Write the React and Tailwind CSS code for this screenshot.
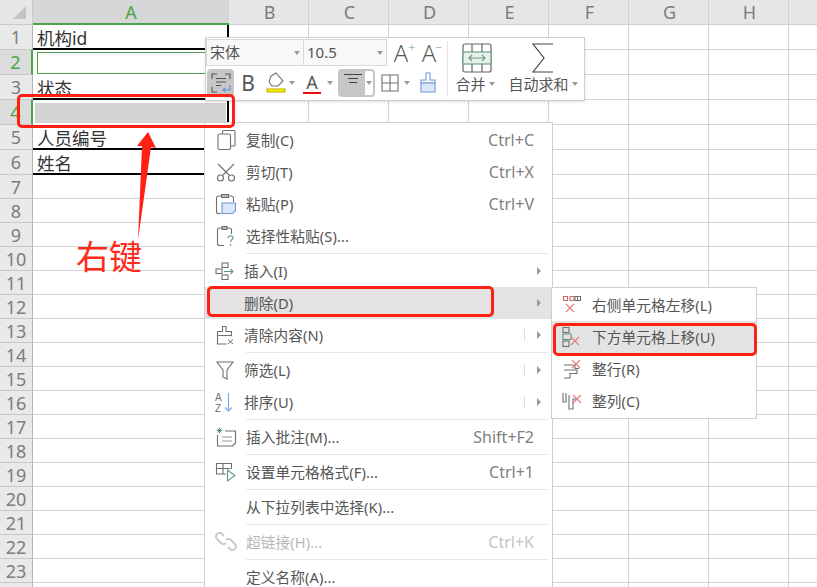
import React from 'react';

const cols = ['A', 'B', 'C', 'D', 'E', 'F', 'G', 'H', ''];
const rows = Array.from({ length: 24 }, (_, i) => i + 1);
const labels = { 1: '机构id', 3: '状态', 5: '人员编号', 6: '姓名' };

const Ico = ({ children, w = 22, h = 22 }) => (
  <svg width={w} height={h} viewBox={`0 0 ${w} ${h}`} fill="none" stroke="#707070" strokeWidth="1.1">
    {children}
  </svg>
);

const Chev = () => <span className="border-x-[3px] border-t-[4px] border-x-transparent border-t-[#9a9a9a]" />;

const Copy = () => (
  <Ico>
    <path d="M7.5 5V2.5a1 1 0 0 1 1-1H19a1 1 0 0 1 1 1V16a1 1 0 0 1-1 1h-3" />
    <rect x="3" y="5" width="12.5" height="15.5" rx="1.5" />
  </Ico>
);
const Cut = () => (
  <Ico>
    <circle cx="5.5" cy="17" r="3" />
    <circle cx="16.5" cy="17" r="3" />
    <path d="M3 3l11.5 11.5M19 3L7.5 14.5" />
  </Ico>
);
const Paste = () => (
  <Ico>
    <path d="M6 20.5H3.5a2 2 0 0 1-2-2V5a2 2 0 0 1 2-2h13a2 2 0 0 1 2 2v4M6.5 1.5h7v3h-7z" />
    <path d="M7 10h13.5v7.5l-3 3H7z" fill="#dbe6f8" stroke="#6f96d8" />
  </Ico>
);
const PasteSpecial = () => (
  <Ico>
    <path d="M9 20.5H4.5a2 2 0 0 1-2-2V5a2 2 0 0 1 2-2h10a2 2 0 0 1 2 2v4M7 1.5h5v3H7z" />
    <path d="M13 13c0-3 5-3 5 0 0 2-2.500 2-2.500 4M15.500 19v2" stroke="#5f9a78" />
  </Ico>
);
const Insert = () => (
  <Ico>
    <rect x="8" y="3" width="6" height="4.500" />
    <rect x="2" y="9" width="6" height="4.500" />
    <rect x="8" y="15" width="6" height="4.500" />
    <path d="M10 11.500h9M16.500 9l2.500 2.500-2.500 2.500" stroke="#5f9a78" />
  </Ico>
);
const Clear = () => (
  <Ico>
    <path d="M8.500 2.500h3.500v5h5.500v4h-14v-4h5zM3.500 11.500V20h9" />
    <path d="M14 15.500l5 4.500M19 15.500l-5 4.500" strokeWidth="1" />
  </Ico>
);
const Filter = () => (
  <Ico>
    <path d="M3 3h16l-6 8v9l-4-2v-7z" />
  </Ico>
);
const Sort = () => (
  <Ico>
    <text x="1" y="9.500" fontSize="10" fill="#707070" stroke="none" fontFamily="Liberation Sans">A</text>
    <text x="1" y="20.500" fontSize="10" fill="#707070" stroke="none" fontFamily="Liberation Sans">Z</text>
    <path d="M14.500 2v18M11 16.500l3.500 3.500 3.500-3.500" stroke="#7aa5e6" />
  </Ico>
);
const Note = () => (
  <Ico>
    <path d="M2.500 9v11h15l3-3V5H10" />
    <path d="M7 11h10M7 15h10" stroke="#9a9a9a" />
    <path d="M1.500 4.500h6M4.500 1.500v6M2.500 2.500l4 4M6.500 2.500l-4 4" stroke="#5f9a78" strokeWidth="1" />
  </Ico>
);
const Format = () => (
  <Ico>
    <path d="M11 13H1.500V2.500h15V8M1.500 7.500h14M8 2.500V13" />
    <path d="M12.500 9l7.500 5.500-7.500 5.500z" stroke="#5f9a78" />
  </Ico>
);
const LinkIco = () => (
  <Ico>
    <g stroke="#c9c9c9" strokeWidth="1.800">
      <path d="M9 5L7 3a3.500 3.500 0 0 0-5 5l4 4a3.500 3.500 0 0 0 5 0" />
      <path d="M11 9a3.500 3.500 0 0 1 5 0l4 4a3.500 3.500 0 0 1-5 5l-2-2" />
    </g>
  </Ico>
);
const X = ({ x = 9, y = 9 }) => <path d={`M${x} ${y}l8 8M${x + 8} ${y}l-8 8`} stroke="#e27a7a" />;
const ShiftLeft = () => (
  <Ico>
    <path d="M2.500 2.500h4v4h-4zM9 2.500h4v4H9z" stroke="#c96b6b" />
    <path d="M14 2.500h5.500v4H14zM16.500 2.500v4" />
    <X x={5} y={10} />
  </Ico>
);
const ShiftUp = () => (
  <Ico>
    <rect x="2" y="1.500" width="6" height="5" />
    <rect x="2" y="8" width="8" height="5.500" stroke="#5f9a78" />
    <rect x="2" y="15" width="6" height="5.500" />
    <X x={10} y={11} />
  </Ico>
);
const WholeRow = () => (
  <Ico>
    <path d="M3 7h11v3.500h4M3 12h13v3.500H9V20H3" />
    <X x={11} y={2} />
  </Ico>
);
const WholeCol = () => (
  <Ico>
    <path d="M2 3v9h3V3M8 5v14h4V9h3" />
    <X x={12} y={5} />
  </Ico>
);

const Sep = () => (
  <div className="h-[3px] flex items-center pl-[41px] pr-[4px]">
    <div className="h-px w-full bg-[#e8e8e8]" />
  </div>
);

const Item = ({ icon, label, shortcut, arrow, split, hover, slot = 'w-[41px]', disabled }) => (
  <div className={`flex items-center h-8 whitespace-nowrap ${hover ? 'bg-[#e3e3e3]' : ''}`}>
    <div className={`flex justify-center shrink-0 ${slot}`}>{icon}</div>
    <span className={`flex-1 tracking-[0.1px] ${disabled ? 'text-[#b8b8b8]' : 'text-[#555]'}`}>{label}</span>
    {shortcut && <span className={`mr-[18px] text-[16px] ${disabled ? 'text-[#c4c4c4]' : 'text-[#808080]'}`}>{shortcut}</span>}
    {split && <span className="w-px h-[12px] bg-[#dcdcdc] mr-[12px]" />}
    {arrow && <span className="border-y-[4px] border-l-[4px] border-y-transparent border-l-[#9a9a9a] mr-[11px]" />}
  </div>
);

function Sheet() {
  return (
    <div className="grid grid-cols-[33px_196px_repeat(7,80px)_60px]">
      <div className="h-[25px] bg-[#e6e6e6] border-r border-b border-[#c8c8c8] flex items-end justify-end pr-[6px] pb-[5px]">
        <div className="w-0 h-0 border-l-[13px] border-b-[13px] border-l-transparent border-b-[#c4c4c4]" />
      </div>
      {cols.map((c, i) => (
        <div
          key={i}
          className={
            i === 0
              ? 'h-[25px] pt-px bg-[#d6d6d6] border-b-2 border-[#4ba34b] text-[#4ba34b] text-[18px] flex items-center justify-center'
              : 'h-[25px] pt-px pl-[2px] bg-[#e6e6e6] border-r border-b border-[#d0d0d0] text-[#7c7c7c] text-[18px] flex items-center justify-center'
          }
        >
          {c}
        </div>
      ))}
      {rows.map((r) => {
        const sel = r === 2 || r === 4;
        const h = r <= 6 ? 'h-[25px]' : 'h-[24px]';
        return (
          <React.Fragment key={r}>
            <div
              className={`${h} pt-px flex items-center justify-center text-[18px] border-b border-[#c8c8c8] ${
                sel ? 'bg-[#dcdcdc] text-[#4ba34b] border-r-2 border-r-[#4ba34b]' : 'bg-[#e9e9e9] text-[#7c7c7c] border-r border-r-[#b4b4b4]'
              }`}
            >
              {r < 24 ? r : ''}
            </div>
            {cols.map((c, i) => {
              if (i === 0 && r <= 6) {
                return (
                  <div
                    key={i}
                    className={`${h} pl-[4px] text-[17.5px] text-[#333] leading-[26px] border-r-2 border-r-black ${
                      r === 2 || r === 4 ? '' : 'border-b-2 border-b-black'
                    }`}
                  >
                    {r === 2 && <div className="h-[22px] w-[180px] border border-[#4ba34b] mt-[2px]" />}
                    {r === 4 && <div className="h-[20px] bg-[#d4d4d4] mt-[3px] -ml-[2px] mr-px" />}
                    {labels[r]}
                  </div>
                );
              }
              return <div key={i} className={`${h} border-r border-b border-[#d4d4d4]`} />;
            })}
          </React.Fragment>
        );
      })}
    </div>
  );
}

function MiniToolbar() {
  return (
    <div className="absolute left-[205px] top-[37px] w-[380px] h-[64px] bg-white border border-[#cfcfcf] shadow-sm flex text-[#555]">
      <div className="w-[241px] pt-px">
        <div className="flex items-center">
          <div className="w-[181px] h-[27px] border border-[#d8d8d8] flex items-center text-[14px]">
            <div className="w-[97px] h-full flex items-center justify-between pl-[3px] pr-[3px] bg-[#f8f8f8] border-r border-[#d8d8d8]">
              <span className="text-[15px]">宋体</span>
              <Chev />
            </div>
            <div className="flex-1 h-full flex items-center justify-between pl-[3px] pr-[3px] bg-[#f8f8f8]">
              <span className="text-[15px]">10.5</span>
              <Chev />
            </div>
          </div>
          <span className="w-[28px] h-[24px] text-center text-[24px] leading-[24px] font-light relative [font-family:'Open_Sans']">
            A<i className="absolute -top-[5px] right-0 text-[12px] not-italic text-[#5f9a78]">+</i>
          </span>
          <span className="w-[28px] h-[24px] text-center text-[24px] leading-[24px] font-light relative [font-family:'Open_Sans']">
            A<i className="absolute -top-[5px] right-[1px] text-[12px] not-italic text-[#5f9a78]">−</i>
          </span>
        </div>
        <div className="flex items-center mt-[3px] h-[28px]">
          <div className="w-[27px] h-[28px] ml-px bg-[#c6c6c6] rounded-[4px] flex items-center justify-center">
            <Ico>
              <path d="M2 7V2h5M15 2h5v5M2 15v5h5" stroke="#555" />
              <path d="M6 6.500h10M6 10h10M6 13.500h5" stroke="#555" />
              <path d="M20 13v5h-7M15 16l-2 2 2 2" stroke="#5a8fdc" />
            </Ico>
          </div>
          <span className="w-[28px] text-center text-[21px] leading-none">B</span>
          <div className="w-[36px] flex items-center gap-[3px] pl-[4px]">
            <Ico w={20} h={22}>
              <path d="M5 4l5-3 7 8-5 5H6L3 10z" />
              <rect x="1" y="17" width="18" height="3" fill="#f6f000" stroke="#c4b800" />
            </Ico>
            <Chev />
          </div>
          <div className="w-[40px] flex items-center gap-[6px] pl-[5px]">
            <span className="w-[18px] text-center text-[18px] leading-[20px] border-b-[2px] border-[#f01010]">A</span>
            <Chev />
          </div>
          <div className="w-[37px] h-[28px] flex rounded-[4px] border-[2px] border-[#c6c6c6]">
            <div className="w-[25px] bg-[#c6c6c6] flex flex-col items-center gap-[3px] pt-[3px]">
              <span className="w-[18px] h-px bg-[#444]" />
              <span className="w-[10px] h-px bg-[#444]" />
              <span className="w-[8px] h-px bg-[#444]" />
            </div>
            <div className="flex-1 flex items-center justify-center">
              <Chev />
            </div>
          </div>
          <div className="flex items-center gap-[5px] ml-[6px]">
            <Ico w={18} h={18}>
              <path d="M1 1h16v16H1zM9 1v16M1 9h16" />
            </Ico>
            <Chev />
          </div>
          <div className="ml-[9px]">
            <Ico w={18} h={22}>
              <path d="M7 1h4v7h5v3H2V8h5z" stroke="#6f96d8" />
              <path d="M2 11h14v9H2z" fill="#dbe6f8" stroke="#6f96d8" />
            </Ico>
          </div>
        </div>
      </div>
      <div className="w-px h-[56px] mt-[3px] bg-[#e4e4e4]" />
      <div className="flex flex-col items-center w-[50px] ml-[1px] pt-[5px] text-[15px] leading-[20px]">
        <svg width="30" height="30" viewBox="0 0 30 30" fill="none" stroke="#6f9e84" strokeWidth="1.200" className="ml-[5px]">
          <rect x="1" y="1" width="28" height="28" rx="2" stroke="#666" />
          <rect x="1" y="9" width="28" height="12" fill="#e6f1ea" />
          <path d="M10 1v8M20 1v8M10 21v8M20 21v8" stroke="#666" />
          <path d="M7 15h16M10 12l-3 3 3 3M20 12l3 3-3 3" />
        </svg>
        <div className="flex items-center gap-[3px] mt-px ml-[2px] whitespace-nowrap">
          合并
          <Chev />
        </div>
      </div>
      <div className="flex flex-col items-center w-[80px] ml-[4px] pt-[5px] text-[15px] leading-[20px]">
        <svg width="22" height="30" viewBox="0 0 22 30" fill="none" stroke="#444" strokeWidth="1.200">
          <path d="M21 1H1l11 14L1 29h20" />
        </svg>
        <div className="flex items-center gap-[3px] mt-px whitespace-nowrap">
          自动求和
          <Chev />
        </div>
      </div>
    </div>
  );
}

function ContextMenu() {
  return (
    <div className="absolute left-[204px] top-[122px] w-[349px] h-[480px] bg-white border border-[#cfcfcf] py-[1px] text-[14.67px]">
      <Item icon={<Copy />} label="复制(C)" shortcut="Ctrl+C" />
      <Item icon={<Cut />} label="剪切(T)" shortcut="Ctrl+X" />
      <Item icon={<Paste />} label="粘贴(P)" shortcut="Ctrl+V" />
      <Item icon={<PasteSpecial />} label="选择性粘贴(S)..." />
      <Sep />
      <Item slot="w-[39px]" icon={<Insert />} label="插入(I)" arrow />
      <Item slot="w-[39px]" hover label="删除(D)" arrow />
      <Item slot="w-[39px]" icon={<Clear />} label="清除内容(N)" split arrow />
      <Sep />
      <Item slot="w-[39px]" icon={<Filter />} label="筛选(L)" split arrow />
      <Item slot="w-[39px]" icon={<Sort />} label="排序(U)" split arrow />
      <Sep />
      <Item icon={<Note />} label="插入批注(M)..." shortcut="Shift+F2" />
      <Sep />
      <Item icon={<Format />} label="设置单元格格式(F)..." shortcut="Ctrl+1" />
      <Sep />
      <Item label="从下拉列表中选择(K)..." />
      <Sep />
      <Item disabled icon={<LinkIco />} label="超链接(H)..." shortcut="Ctrl+K" />
      <Sep />
      <Item label="定义名称(A)..." />
    </div>
  );
}

function SubMenu() {
  return (
    <div className="absolute left-[551px] top-[287px] w-[206px] h-[132px] bg-white border border-[#cfcfcf] py-[1px] text-[14.67px]">
      <Item slot="w-[40px]" icon={<ShiftLeft />} label="右侧单元格左移(L)" />
      <Item slot="w-[40px]" hover icon={<ShiftUp />} label="下方单元格上移(U)" />
      <Item slot="w-[40px]" icon={<WholeRow />} label="整行(R)" />
      <Item slot="w-[40px]" icon={<WholeCol />} label="整列(C)" />
    </div>
  );
}

export default function App() {
  return (
    <div
      className="relative w-[817px] h-[587px] overflow-hidden bg-white"
      style={{ fontFamily: '"Noto Sans", "Noto Sans CJK SC", sans-serif' }}
    >
      <Sheet />
      <MiniToolbar />
      <ContextMenu />
      <SubMenu />

      {/* red markup on top of the screenshot */}
      <div className="absolute left-[17px] top-[94px] w-[218px] h-[34px] border-[3px] border-[#ff1f13] rounded-[5px]" />
      <div className="absolute left-[207px] top-[286px] w-[287px] h-[31px] border-[3px] border-[#ff1f13] rounded-[5px]" />
      <div className="absolute left-[553px] top-[323px] w-[204px] h-[33px] border-[3px] border-[#ff1f13] rounded-[5px]" />
      <svg className="absolute left-0 top-0" width="817" height="587" fill="#ff1f13">
        <polygon points="148,132 156,148 151,147 138,240 142,146 137,146" />
      </svg>
      <span className="absolute left-[76px] top-[234px] text-[33px] leading-[46px] text-[#ff2a1a]">右键</span>
    </div>
  );
}
